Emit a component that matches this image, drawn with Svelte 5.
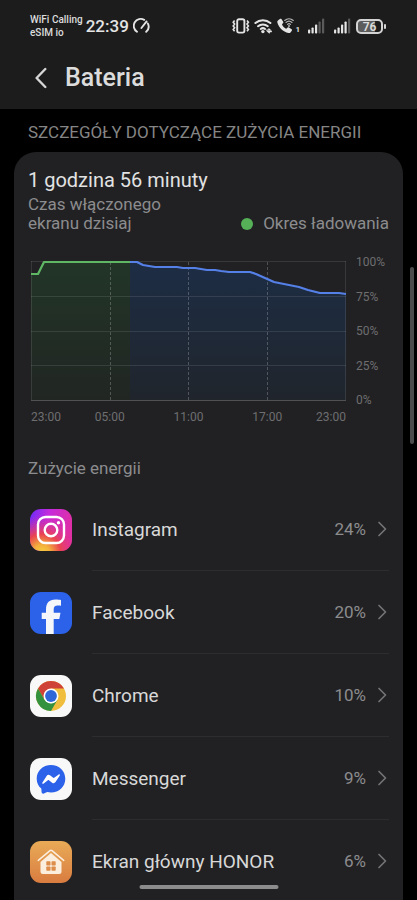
<script lang="ts">
  type App = { id: string; name: string; usage: number };

  const apps: App[] = [
    { id: 'instagram', name: 'Instagram', usage: 24 },
    { id: 'facebook', name: 'Facebook', usage: 20 },
    { id: 'chrome', name: 'Chrome', usage: 10 },
    { id: 'messenger', name: 'Messenger', usage: 9 },
    { id: 'home', name: 'Ekran główny HONOR', usage: 6 },
  ];

  const levels = ['100%', '75%', '50%', '25%', '0%'];
  const hours = ['23:00', '05:00', '11:00', '17:00', '23:00'];

  const charging = '0,13 7,13 13,1 99,1';
  const discharging =
    '99,1 106,1 112,4 124,6 146,6 152,7 164,7 170,8 176,9 184,9 190,10 198,11 219,11 225,13 234,17 243,21 268,26 277,29 289,32 308,32 315,33';
</script>

{#snippet signal(bars: number)}
  <svg class="signal" width="18" height="16" viewBox="0 0 18 16" aria-hidden="true">
    {#each [4, 6, 9, 12, 15] as h, i}
      <rect x={i * 3.5} y={15.5 - h} width="2.2" height={h} rx="0.8" fill={i < bars ? '#e4e4e4' : '#5a5a5a'} />
    {/each}
  </svg>
{/snippet}

<div class="screen">
  <header>
    <div class="status">
      <div class="carrier">
        <span>WiFi Calling</span>
        <span>eSIM io</span>
      </div>
      <time>22:39</time>
      <svg width="18" height="18" viewBox="0 0 18 18" fill="none" stroke="#e4e4e4" stroke-width="1.9" stroke-linecap="round" aria-hidden="true">
        <path d="M4 14.8A7 7 0 0 1 11.2 2.8" />
        <path d="M14.8 6.4A7 7 0 0 1 13.2 14.8" />
        <path d="M8.4 11 13.6 4.4" />
      </svg>
      <div class="indicators">
        <svg width="18" height="16" viewBox="0 0 18 16" fill="none" stroke="#e4e4e4" aria-hidden="true">
          <rect x="5.2" y="1.2" width="7.2" height="13.4" rx="1.8" stroke-width="1.9" />
          <path
            d="M2.6 2.6 1.2 4.3l1.4 1.8-1.4 1.8 1.4 1.8-1.4 1.8 1.4 1.7M15 2.6l1.4 1.7L15 6.1l1.4 1.8L15 9.700l1.400 1.800L15 13.200"
            stroke-width="1.6"
          />
        </svg>
        <svg width="19" height="16" viewBox="0 0 19 16" fill="none" stroke="#e4e4e4" stroke-width="2" stroke-linecap="round" aria-hidden="true">
          <path d="M1.4 5a11.4 11.4 0 0 1 15 0" />
          <path d="M4 8.2a7.500 7.500 0 0 1 9.800 0" />
          <path d="M6.700 11a3.600 3.600 0 0 1 4.400 0" />
          <circle cx="8.9" cy="13.6" r="1.7" fill="#e4e4e4" stroke="none" />
          <path d="M12.800 12.200h3.400l-1.300-1.200M17.400 13.600h-3.400l1.300 1.200" stroke-width="1.3" />
        </svg>
        <div class="call">
          <svg width="18" height="16" viewBox="0 0 18 16" aria-hidden="true">
            <path
              fill="#e4e4e4"
              d="M1.2 2.2 2.9.9c.5-.4 1.1-.3 1.5.2l1.8 2.6c.3.5.3 1-.1 1.400l-.9 1c-.2.3-.2.6 0 .9.8 1.500 1.900 2.600 3.400 3.500.3.2.7.2 1 0l1-1c.4-.4 1-.4 1.400-.1l2.600 1.800c.5.4.6 1 .2 1.500l-1.100 1.500c-.5.7-1.300 1-2.200.8C6 14 1.700 9.500.3 4.300c-.2-.8.2-1.600.9-2.100z"
            />
            <g fill="none" stroke="#b5b5b5" stroke-width="1.1" stroke-linecap="round">
              <path d="M7.700 2.500a6.500 6.500 0 0 1 8.600 0M9 4.500a4.500 4.500 0 0 1 6 0M10.500 6.300a2.300 2.300 0 0 1 3 0" />
            </g>
            <circle cx="12" cy="8" r="1" fill="#b5b5b5" />
          </svg>
          <small>1</small>
        </div>
        {@render signal(3)}
        {@render signal(4)}
        <div class="battery"><span>76</span></div>
      </div>
    </div>
    <div class="title">
      <button type="button" aria-label="Wstecz">
        <svg width="12" height="22" viewBox="0 0 12 22" fill="none" stroke="#d6d6d6" stroke-width="2.4" stroke-linecap="round" stroke-linejoin="round">
          <path d="M10.3 2 1.6 11l8.700 9" />
        </svg>
      </button>
      <h1>Bateria</h1>
    </div>
  </header>

  <main>
    <h2>SZCZEGÓŁY DOTYCZĄCE ZUŻYCIA ENERGII</h2>
    <section class="card">
      <h3>1 godzina 56 minuty</h3>
      <div class="summary">
        <p>Czas włączonego<br />ekranu dzisiaj</p>
        <span class="legend">Okres ładowania</span>
      </div>

      <div class="chart">
        <svg class="plot" viewBox="0 0 315 140" preserveAspectRatio="none" role="img" aria-label="Poziom baterii">
          <defs>
            <linearGradient id="green" x1="0" y1="0" x2="0" y2="1">
              <stop offset="0" stop-color="#223527" />
              <stop offset="1" stop-color="#212623" />
            </linearGradient>
            <linearGradient id="blue" x1="0" y1="0" x2="0" y2="1">
              <stop offset="0" stop-color="#1d2d45" />
              <stop offset="1" stop-color="#20252c" />
            </linearGradient>
          </defs>
          <polygon points="{charging} 99,139 0,139" fill="url(#green)" />
          <polygon points="{discharging} 315,139 99,139" fill="url(#blue)" />
          <g stroke="#fff" stroke-opacity="0.1" fill="none">
            <path d="M0 .5h315M0 35.5h315M0 70.5h315M0 104.5h315M.5 0v139M314.5 0v139" />
            <path d="M0 139.5h315" stroke-opacity="0.22" />
            <path d="M79.5 1v138M157.5 1v138M236.5 1v138" stroke-opacity="0.22" stroke-dasharray="3 2" />
          </g>
          <g fill="none" stroke-width="2.2" stroke-linejoin="round">
            <polyline points={charging} stroke="#5fb765" />
            <polyline points={discharging} stroke="#5580e8" />
          </g>
        </svg>
        <div class="levels">
          {#each levels as level}
            <span>{level}</span>
          {/each}
        </div>
        <div class="hours">
          {#each hours as hour}
            <span>{hour}</span>
          {/each}
        </div>
      </div>

      <h4>Zużycie energii</h4>
      <ul>
        {#each apps as app (app.id)}
          <li>
            <a href="#{app.id}">
              <svg class="logo" width="42" height="42" viewBox="0 0 42 42" aria-hidden="true">
                {#if app.id === 'instagram'}
                  <defs>
                    <linearGradient id="ig-base" x1="0" y1="0" x2="1" y2="0.2">
                      <stop offset="0" stop-color="#6a2bfa" />
                      <stop offset="0.45" stop-color="#c42bdc" />
                      <stop offset="1" stop-color="#de2fa8" />
                    </linearGradient>
                    <radialGradient id="ig-warm" cx="0.28" cy="1.05" r="0.9">
                      <stop offset="0" stop-color="#f8d040" />
                      <stop offset="0.22" stop-color="#f3b03c" />
                      <stop offset="0.5" stop-color="#ea4450" />
                      <stop offset="1" stop-color="#e0309c" stop-opacity="0" />
                    </radialGradient>
                  </defs>
                  <rect width="42" height="42" fill="url(#ig-base)" />
                  <rect width="42" height="42" fill="url(#ig-warm)" />
                  <g fill="none" stroke="#fff" stroke-width="2.4">
                    <rect x="8" y="8" width="26" height="26" rx="7.5" />
                    <circle cx="21" cy="21" r="6.3" />
                  </g>
                  <circle cx="28.5" cy="13.7" r="1.7" fill="#fff" />
                {:else if app.id === 'facebook'}
                  <rect width="42" height="42" fill="#2c62ea" />
                  <path
                    fill="#f4f6fa"
                    d="M16 42V27h-4.300v-6.200H16v-3.300c0-6.500 3-10 9.500-10 2.200 0 4.300.2 5.500.6v5.700c-.8-.2-2-.3-3.300-.3-2.900 0-4 1.200-4 3.900v3.400h6.800L29.300 27h-5.600v15z"
                  />
                {:else if app.id === 'chrome'}
                  <rect width="42" height="42" fill="#f8f8f8" />
                  <circle cx="21" cy="21" r="15" fill="#f0bd3c" />
                  <path d="M8 13.500A15 15 0 0 1 34 13.500H21L14.500 24.700z" fill="#cf4237" />
                  <path d="M8 13.500A15 15 0 0 0 21 36l6.500-11.300L21 28.500l-6.500-3.800z" fill="#34923f" />
                  <circle cx="21" cy="21" r="7.5" fill="#fff" />
                  <circle cx="21" cy="21" r="5.9" fill="#2f66d8" />
                {:else if app.id === 'messenger'}
                  <rect width="42" height="42" fill="#f8f8f8" />
                  <path
                    fill="#2c62ea"
                    d="M21 7C12.800 7 6.700 12.900 6.700 20.700c0 4.100 1.700 7.500 4.600 9.900l.3 3.700c.1 1.200 1.200 1.800 2.300 1.300l3.300-1.500c1.200.3 2.500.5 3.800.5 8.200 0 14.300-6 14.300-13.800S29.200 7 21 7z"
                  />
                  <path
                    fill="#fff"
                    d="M12.300 24.700 16.600 17.900c.8-1.200 2.300-1.500 3.400-.6l3.200 2.500c.3.2.7.2 1 0l4.500-3.400c.7-.5 1.500.2 1.100 1l-4.300 6.700c-.8 1.200-2.300 1.500-3.400.6l-3.200-2.400c-.3-.3-.7-.3-1 0l-4.500 3.400c-.7.5-1.500-.3-1.100-1z"
                  />
                {:else}
                  <defs>
                    <linearGradient id="home-bg" x1="0" y1="0" x2="0" y2="1">
                      <stop offset="0" stop-color="#e9ab57" />
                      <stop offset="1" stop-color="#d97c40" />
                    </linearGradient>
                  </defs>
                  <rect width="42" height="42" fill="url(#home-bg)" />
                  <path d="M10.500 21 21 12l10.500 9v9.500a2.500 2.500 0 0 1-2.500 2.500H13a2.500 2.500 0 0 1-2.500-2.500z" fill="#fbeedd" />
                  <path d="M8.300 19.400 20 9.600q1-.8 2 0l11.700 9.800" fill="none" stroke="#fbeedd" stroke-width="1.5" stroke-linecap="round" />
                  <g fill="#dd8c4a">
                    <rect x="16.3" y="20.3" width="4.2" height="4.2" rx="0.7" />
                    <rect x="21.5" y="20.3" width="4.2" height="4.2" rx="0.7" />
                    <rect x="16.3" y="25.5" width="4.2" height="4.2" rx="0.7" />
                    <rect x="21.5" y="25.5" width="4.2" height="4.2" rx="0.7" />
                  </g>
                {/if}
              </svg>
              <span class="row">
                <span class="name">{app.name}</span>
                <span class="usage">{app.usage}%</span>
                <svg width="10" height="16" viewBox="0 0 10 16" fill="none" stroke="#737375" stroke-width="1.7" stroke-linecap="round" stroke-linejoin="round" aria-hidden="true">
                  <path d="M2 1.500 8.500 8 2 14.500" />
                </svg>
              </span>
            </a>
          </li>
        {/each}
      </ul>
    </section>
  </main>

  <div class="scrollbar"></div>
  <div class="home-bar"></div>
</div>

<style>
  :global(body) {
    background: #000;
  }

  .screen {
    position: relative;
    height: 100vh;
    overflow: hidden;
    font-family: Roboto, 'Noto Sans', sans-serif;
    color: #dcdcdc;
    background: #000;
  }

  header {
    padding: 12px 34px 15px 30px;
    background: #1c1c1c;
  }

  .status {
    display: flex;
    align-items: center;
    height: 28px;

    & time {
      margin: 0 4px 0 3px;
      font-size: 17px;
      font-weight: 500;
      color: #e4e4e4;
    }
  }

  .carrier {
    display: flex;
    flex-direction: column;
    font-size: 10px;
    font-weight: 500;
    line-height: 13px;
    white-space: nowrap;
  }

  .indicators {
    display: flex;
    gap: 4px;
    align-items: center;
    margin-left: auto;
  }

  .call {
    display: flex;
    align-items: flex-end;

    & small {
      font-size: 8px;
      font-weight: 700;
      line-height: 8px;
    }
  }

  .signal {
    margin-left: 4px;
  }

  .battery {
    position: relative;
    box-sizing: border-box;
    width: 27px;
    height: 15px;
    font-size: 12px;
    font-weight: 600;
    line-height: 12px;
    text-align: center;
    background: linear-gradient(90deg, #5c5c5c 76%, #1c1c1c 76%);
    border: 2px solid #d4d4d4;
    border-radius: 5px;

    &::after {
      position: absolute;
      top: 3px;
      right: -5px;
      width: 2px;
      height: 5px;
      content: '';
      background: #d4d4d4;
      border-radius: 1px;
    }
  }

  .title {
    display: flex;
    gap: 18px;
    align-items: center;
    height: 32px;
    padding: 22px 0 0 5px;

    & button {
      display: flex;
      padding: 0;
      cursor: pointer;
      background: none;
      border: none;
    }
  }

  h1,
  h2,
  h3,
  h4,
  p,
  ul {
    padding: 0;
    margin: 0;
  }

  h1 {
    font-size: 25px;
    font-weight: 500;
    line-height: 32px;
  }

  h2 {
    padding: 13px 28px 10px;
    font-size: 17px;
    font-weight: 400;
    line-height: 20px;
    color: #858585;
    white-space: nowrap;
  }

  .card {
    min-height: 100vh;
    padding: 16px 14px;
    margin: 0 14px;
    background: #212123;
    border-radius: 22px;
  }

  h3 {
    font-size: 20px;
    font-weight: 400;
    line-height: 24px;
    color: #e2e2e2;
  }

  .summary {
    display: flex;
    align-items: flex-end;
    justify-content: space-between;
    padding-top: 3px;
    font-size: 17px;
    line-height: 19px;
    color: #8c8c8e;
  }

  .legend {
    display: flex;
    gap: 10px;
    align-items: center;

    &::before {
      width: 12px;
      height: 12px;
      content: '';
      background: #55b058;
      border-radius: 50%;
    }
  }

  .chart {
    display: grid;
    grid-template-columns: 1fr 33px;
    column-gap: 10px;
    margin: 28px 0 0 3px;
    font-size: 12px;
    line-height: 14px;
    color: #6e6e70;
  }

  .plot {
    width: 100%;
    height: 140px;
    overflow: visible;
  }

  .levels {
    display: flex;
    flex-direction: column;
    justify-content: space-between;
    margin: -6px 0;
  }

  /* the inner labels are centred under the dashed lines */
  .hours {
    display: grid;
    grid-template-columns: 1fr 2fr 2fr 2fr 1fr;
    padding-top: 9px;
    text-align: center;

    & span:first-child {
      text-align: left;
    }

    & span:last-child {
      text-align: right;
    }
  }

  h4 {
    margin-top: 34px;
    font-size: 17px;
    font-weight: 400;
    line-height: 20px;
    color: #8c8c8e;
  }

  ul {
    margin-top: 10px;
    list-style: none;
  }

  a {
    display: flex;
    gap: 20px;
    align-items: center;
    padding-left: 2px;
    color: inherit;
    text-decoration: none;
  }

  .logo {
    flex: none;
    border-radius: 11px;
  }

  .row {
    display: flex;
    flex: 1;
    align-items: center;
    height: 82px;
    padding-right: 2px;
    border-bottom: 1px solid #2d2d2f;
  }

  .name {
    flex: 1;
    font-size: 19px;
    color: #d8d8d8;
  }

  .usage {
    margin-right: 11px;
    font-size: 17px;
    color: #8c8c8e;
  }

  .scrollbar {
    position: absolute;
    top: 267px;
    right: 3px;
    width: 4px;
    height: 177px;
    background: #4c4c4c;
    border-radius: 2px;
  }

  .home-bar {
    position: absolute;
    bottom: 11px;
    left: 50%;
    width: 139px;
    height: 4px;
    background: #8c8c8c;
    border-radius: 2px;
    transform: translateX(-50%);
  }
</style>
